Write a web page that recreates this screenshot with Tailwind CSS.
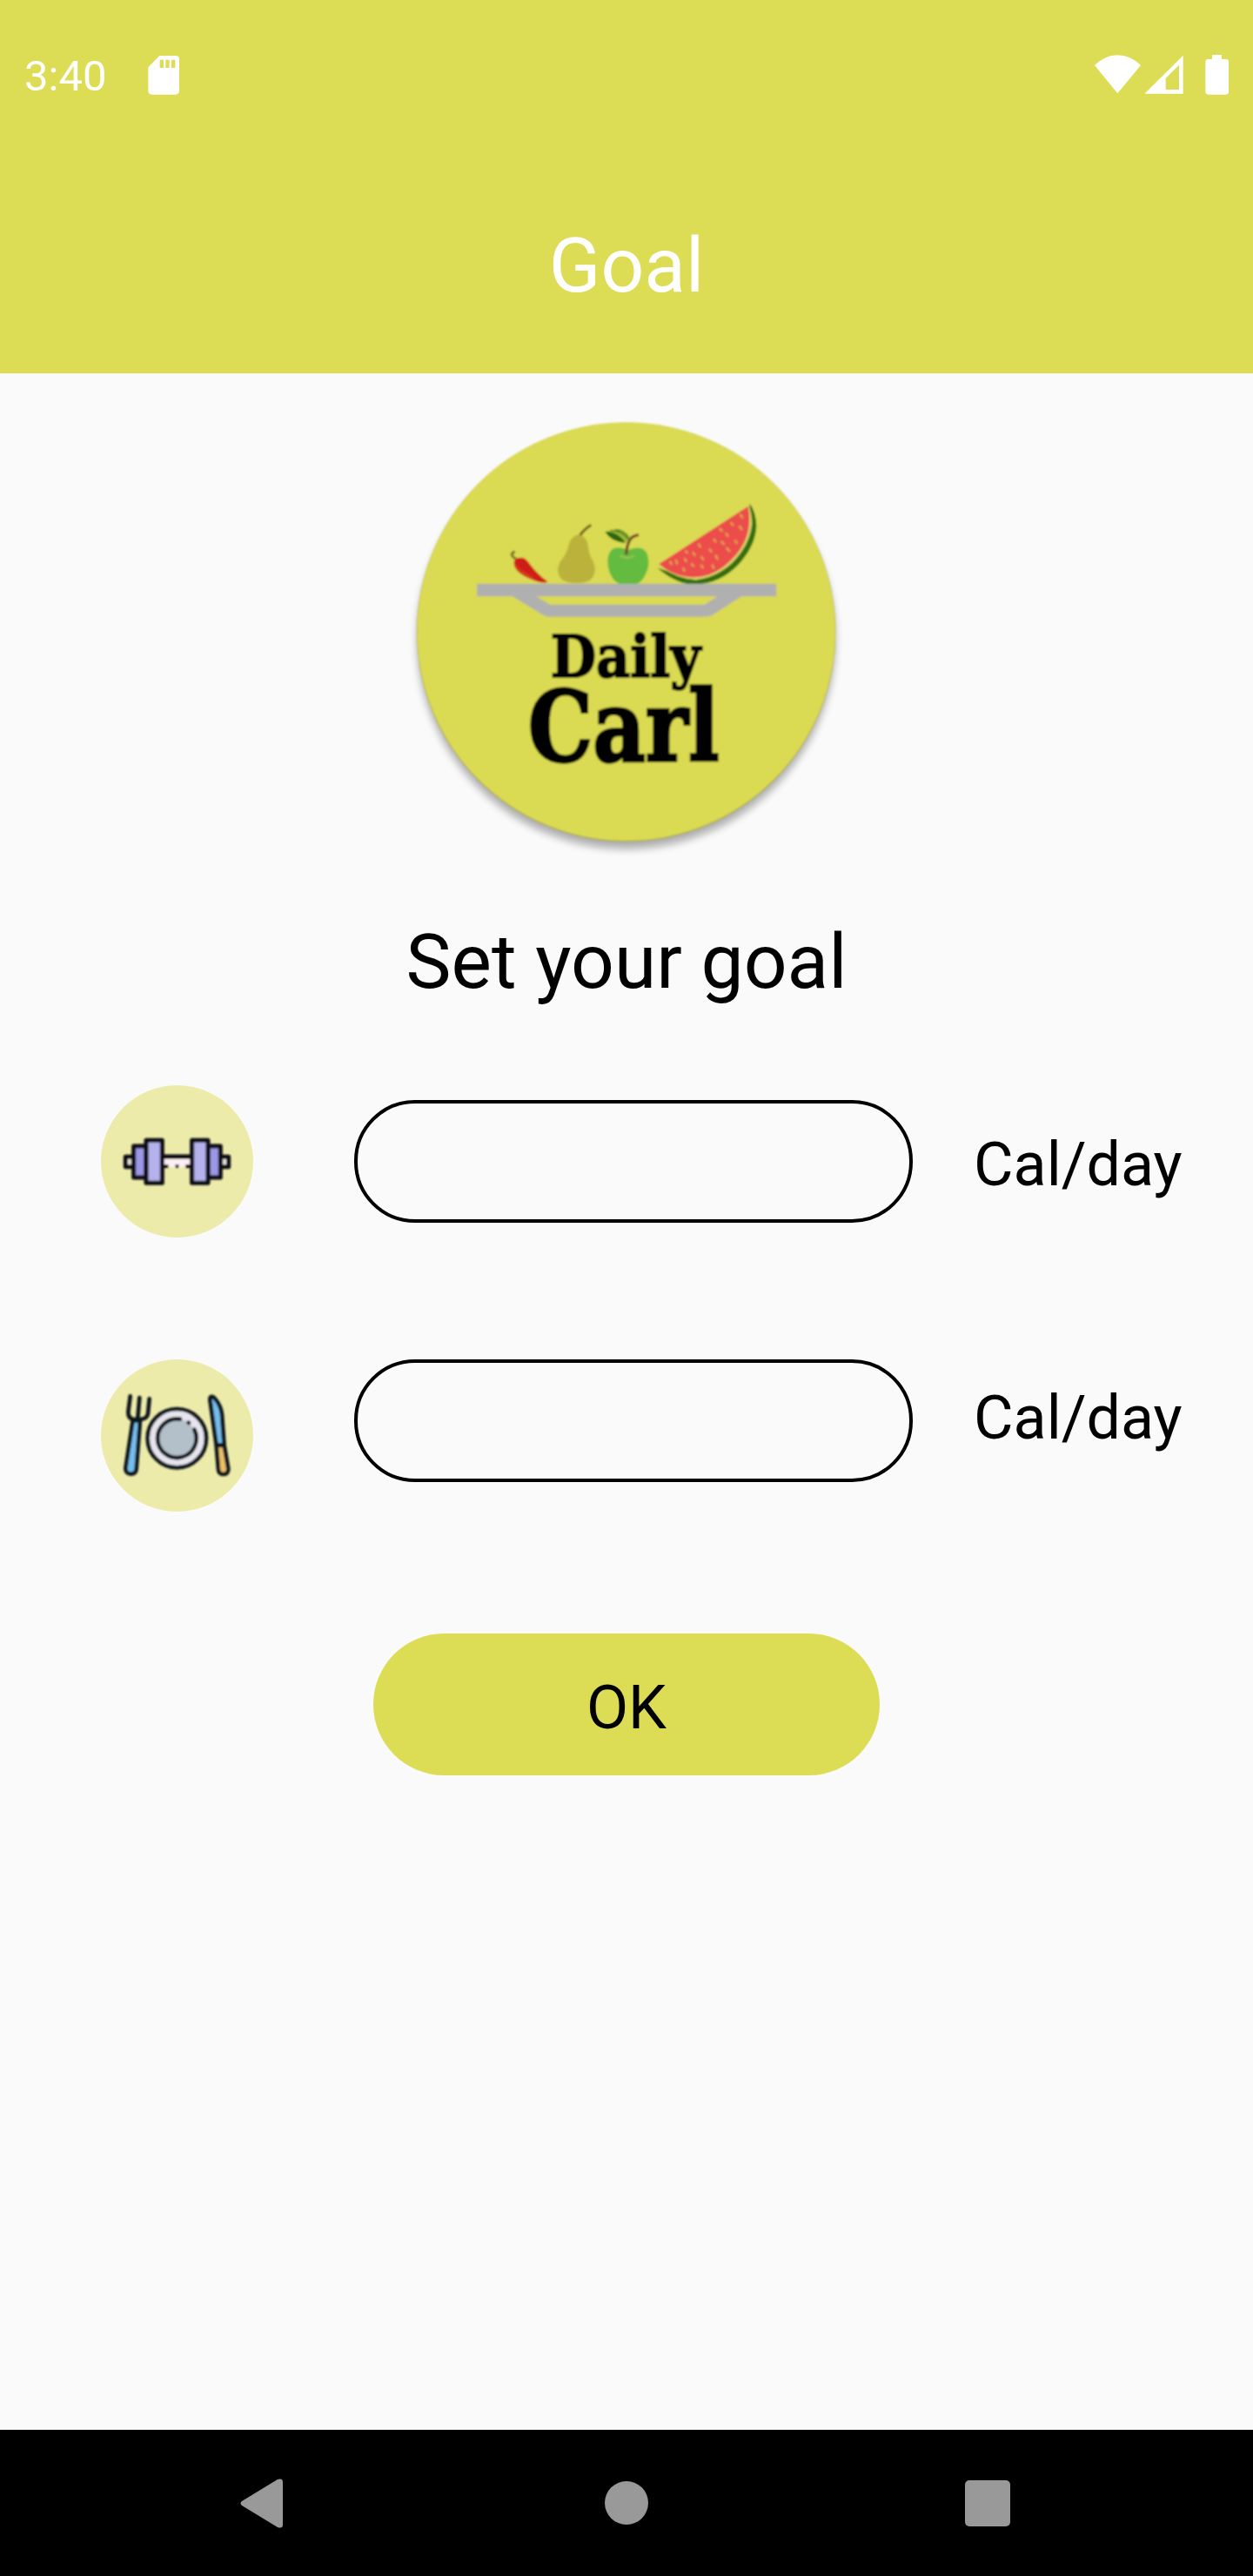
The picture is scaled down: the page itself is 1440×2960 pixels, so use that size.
<!DOCTYPE html>
<html lang="en">
<head>
<meta charset="utf-8">
<title>Goal</title>
<script src="https://cdn.jsdelivr.net/npm/@tailwindcss/browser@4"></script>
</head>
<body class="bg-[#fafafa]">
<div class="flex h-[2960px] w-[1440px] flex-col bg-[#fafafa] font-['Roboto',sans-serif] text-black">
  <header class="flex h-[429px] flex-col bg-[#dddc55] text-white">
    <div class="flex h-[172px] items-center pr-7 pl-7">
      <span class="w-[142px] text-[49px] leading-[60px] pt-1">3:40</span>
      <svg class="h-[45px] w-9" viewBox="508 72 108 135" fill="#fff"><path fill-rule="evenodd" d="M548 72H603Q616 72 616 85V193Q616 206 603 206H522Q509 206 509 193V112ZM549 86V114H562V86ZM569 86V114H582V86ZM589 86V114H602V86Z"/></svg>
      <svg class="ml-auto h-[46px] w-[154px]" viewBox="54 69 462 138" fill="#fff">
        <path d="M54 105Q90 70 133 70T213 105L133 202Z"/>
        <path fill-rule="evenodd" d="M226 203L359 71V203ZM299 150V189H345V104Z"/>
        <path d="M459 69H492V84H506Q516 84 516 94V196Q516 206 506 206H446Q436 206 436 196V94Q436 84 446 84H459Z"/>
      </svg>
    </div>
    <h1 class="pt-[78px] text-center text-[87.5px] leading-[110px]">Goal</h1>
  </header>

  <main class="flex flex-1 flex-col items-center">
    <svg class="mt-[41px] h-[520px] w-[520px] shrink-0" viewBox="0 0 1560 1560">
      <defs><filter id="shadow" x="-10%" y="-10%" width="120%" height="120%"><feGaussianBlur stdDeviation="14"/></filter><filter id="soft"><feGaussianBlur stdDeviation="2.5"/></filter></defs>
      <circle cx="779" cy="796" r="721" fill="#000" opacity=".3" filter="url(#shadow)"/>
      <g filter="url(#soft)">
      <circle cx="779" cy="769" r="722" fill="#a9a846"/>
      <circle cx="779" cy="767" r="721" fill="#dada52"/>
      <g fill="none" stroke-linecap="round">
        <path d="M400 518Q374 502 392 493" stroke="#75752b" stroke-width="9"/>
      </g>
      <path d="M392 526Q396 511 417 512Q432 511 448 536Q474 570 508 595Q502 603 470 594Q388 567 392 526Z" fill="#d01d18"/>
      <path d="M399 548Q425 577 466 589M397 536Q420 565 460 582" stroke="#d7812f" stroke-width="3" stroke-dasharray="6 5" fill="none"/>
      <path d="M619 438Q629 418 658 400" stroke="#755b25" stroke-width="9" fill="none"/>
      <path d="M614 434Q643 436 648 474Q651 502 665 525Q679 557 663 581Q648 600 607 600Q567 600 551 581Q535 553 551 527Q568 507 577 484Q585 436 614 434Z" fill="#bbb23a"/>
      <path d="M785 486Q830 467 849 494Q861 520 853 552Q839 596 811 605Q798 608 786 602Q773 609 756 603Q724 587 717 545Q709 498 735 481Q757 472 785 486Z" fill="#64bb40"/>
      <path d="M757 505Q780 521 807 505" stroke="#96c94b" stroke-width="6" fill="none"/>
      <path d="M779 502Q782 457 798 443Q807 436 822 434" stroke="#754b25" stroke-width="10" fill="none"/>
      <path d="M706 423Q728 414 755 415Q779 422 790 447L775 462Q726 458 706 423Z" fill="#a0b93c"/>
      <path d="M706 423Q738 422 758 440Q772 450 775 462Q726 456 706 423Z" fill="#2c680c"/>
      <path d="M725 418Q770 423 786 449M742 415Q778 420 789 445" stroke="#347313" stroke-width="4" fill="none"/>
      <path d="M887 548Q953 605 1017 605Q1104 602 1168 534Q1226 469 1228 402Q1226 354 1205 326L1198 410L1140 530L1020 590Z" fill="#34700f"/>
      <path d="M890 538Q956 588 1018 588Q1086 583 1145 530Q1207 467 1213 394Q1212 359 1202 332Z" fill="#dccf69"/>
      <path d="M892 534L1199 335Q1220 440 1146 515Q1089 576 1018 580Q944 580 892 534Z" fill="#ec4d4c"/>
      <path d="M930 524l6 13M950 519l5 16M983 488l8 9M980 515l7 12M1008 493l9 13M1003 533l10 10M974 547l7 13M1028 464l7 13M1037 508l9 13M1036 537l9 11M1065 482l9 12M1087 503l8 16M1075 536l7 15M1080 448l9 11M1106 455l11 12M1125 478l11 14M1100 411l11 11M1122 427l9 13M1139 391l10 11M1153 452l9 12M1168 403l11 13M1172 363l9 13" stroke="#dba449" stroke-width="7" fill="none"/>
      <path fill-rule="evenodd" fill="#b0b0b0" d="M264 602H1297V646H1177L1076 710Q1067 716 1051 716H513Q501 716 492 710L387 646H264ZM469 646L516 674H1050L1092 646Z"/>
      <g font-family="DejaVu Serif, serif" font-weight="700" stroke="#000">
        <text x="518" y="923" font-size="202" stroke-width="6" textLength="518" lengthAdjust="spacingAndGlyphs">Daily</text>
        <text x="440" y="1213" font-size="338" stroke-width="10" textLength="660" lengthAdjust="spacingAndGlyphs">Carl</text>
      </g>
      </g>
    </svg>

    <h2 class="mt-[60px] text-[87.5px] leading-[110px]">Set your goal</h2>

    <form class="mt-[87px] flex w-full flex-col items-center">
      <div class="flex w-full items-center pl-[116px]">
        <svg class="size-[175px]" viewBox="48 50 525 525">
          <circle cx="310.500" cy="312.500" r="262.500" fill="#ecebaa"/>
          <g filter="url(#soft)">
          <path d="M262 304H358V326H345L325 334H295L280 326H262Z" fill="#fbeff5"/>
          <g stroke="#0c0c12" stroke-width="15" stroke-linejoin="round">
            <path d="M262 296H358" fill="none"/>
            <path d="M264 329H280M340 329H358M305 329H316" fill="none" stroke-width="12"/>
            <rect x="133" y="297" width="27" height="34" fill="#e9e4dc"/><rect x="461" y="297" width="27" height="34" fill="#e9e4dc"/>
            <rect x="161" y="260" width="42" height="108" fill="#9c97e6"/><rect x="418" y="260" width="42" height="108" fill="#9c97e6"/>
            <rect x="204" y="240" width="55" height="147" fill="#b4b1ec"/><rect x="362" y="240" width="55" height="147" fill="#b4b1ec"/>
          </g>
          </g>
        </svg>
        <input class="ml-[116px] h-[141px] w-[642px] rounded-[70px] border-4 border-black px-10 text-[70px] outline-none" aria-label="Exercise calories">
        <span class="ml-[70px] pt-[7px] text-[70px] leading-[82px]">Cal/day</span>
      </div>
      <div class="mt-[140px] flex w-full items-start pl-[116px]">
        <svg class="size-[175px]" viewBox="48 36 525 525">
          <circle cx="310.500" cy="298.500" r="262.500" fill="#ecebaa"/>
          <g filter="url(#soft)" stroke="#11151a" stroke-width="14" stroke-linejoin="round" stroke-linecap="round">
            <path d="M158 247H183L170 415Q168 431 151 431Q132 429 133 411Z" fill="#76bdee"/>
            <path d="M149 163L142 218Q142 243 166 243H182Q207 242 210 224L215 172M181 168L175 238" fill="none"/>
            <circle cx="310" cy="308" r="101" fill="#e6e4ed"/>
            <circle cx="310" cy="308" r="66" fill="#b3c0c9" stroke="none"/>
            <path d="M321 242A67 67 0 1 0 370 278M350 254L351 255" fill="none"/>
            <path d="M446 331L424 175Q423 159 438 168Q461 193 465 225L473 331Z" fill="#76bdee"/>
            <path d="M446 333H473L487 413Q487 431 470 432Q454 431 453 415Z" fill="#ecc06b"/>
          </g>
        </svg>
        <input class="ml-[116px] h-[141px] w-[642px] rounded-[70px] border-4 border-black px-10 text-[70px] outline-none" aria-label="Food calories">
        <span class="ml-[70px] pt-[26px] text-[70px] leading-[82px]">Cal/day</span>
      </div>
      <button type="button" class="mt-[140px] h-[163px] w-[582px] rounded-full bg-[#dddc55] pt-[7px] text-[70px] leading-[82px]">OK</button>
    </form>
  </main>

  <nav class="flex h-[168px] items-center bg-black pl-[276px]">
    <svg class="h-[57px] w-[50px]" viewBox="0 0 50 57"><path d="M2 26L43 1Q49-1 49 4V53Q49 58 43 56L2 31Q-1 28.500 2 26Z" fill="#999"/></svg>
    <div class="ml-[369px] size-[50px] rounded-full bg-[#999]"></div>
    <div class="ml-[364px] h-[53px] w-[52px] rounded-[5px] bg-[#999]"></div>
  </nav>
</div>
</body>
</html>
